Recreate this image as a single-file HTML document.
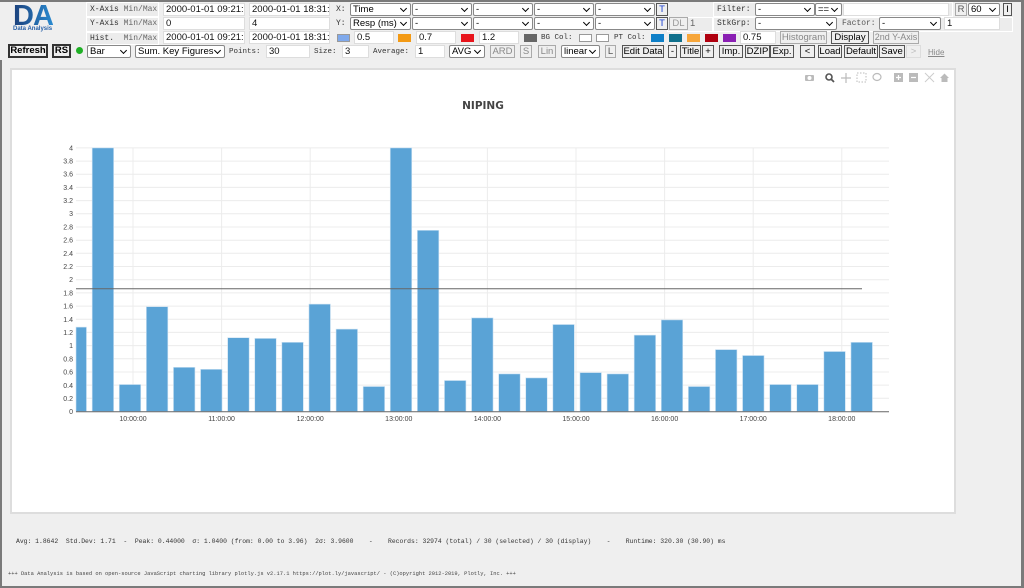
<!DOCTYPE html>
<html><head><meta charset="utf-8"><style>
*{box-sizing:border-box;margin:0;padding:0}
body{width:1024px;height:588px;background:#efefef;font-family:"Liberation Sans",sans-serif;font-size:9.5px;color:#000;position:relative;overflow:hidden}
.frame{position:absolute;left:0;top:0;width:1024px;height:588px;border-left:2px solid #7a7a7a;border-right:3px solid #7a7a7a;border-bottom:2px solid #7a7a7a;border-top:2px solid #7a7a7a;pointer-events:none}
.a{position:absolute;white-space:nowrap}
.cell{position:absolute;background:#ececec;border:1px solid #fff}
.lbl{position:absolute;font-family:"Liberation Mono",monospace;font-size:8px;color:#333;white-space:nowrap}
.lbl i{font-style:normal;color:#666}
.in,.sel,.btn{white-space:nowrap;overflow:hidden}
.in{position:absolute;height:13px;background:#fff;border:1px solid #ddd;font-size:9.5px;line-height:11px;padding-left:2px;color:#111}
.sel{position:absolute;height:13px;background:#fff;border:1px solid #888;font-size:9.5px;line-height:11px;padding-left:2px;border-radius:2px}
.sel:after{content:"";position:absolute;right:4px;top:2px;width:4px;height:4px;border-right:1.5px solid #000;border-bottom:1.5px solid #000;transform:rotate(45deg);background:#fff}
.btn{position:absolute;height:13px;background:#efefef;border:1px solid #555;font-size:9.5px;line-height:11px;text-align:center;color:#000}
.dis{color:#999;border-color:#aaa}
.sw{position:absolute;width:13px;height:8px}
</style></head><body>
<div class="frame"></div>
<div class="a" style="left:0;top:2px;width:1021px;height:58px;background:#efefef"></div>
<div class="cell" style="left:86px;top:2px;width:73px;height:15px"></div>
<div class="cell" style="left:86px;top:17px;width:73px;height:15px"></div>
<div class="cell" style="left:86px;top:32px;width:73px;height:13px"></div>
<div class="cell" style="left:713px;top:2px;width:240px;height:15px"></div>
<div class="cell" style="left:713px;top:17px;width:300px;height:15px"></div>
<div class="cell" style="left:667px;top:17px;width:46px;height:15px"></div>
<div class="a" style="left:13px;top:1px;font-size:29px;font-weight:bold;letter-spacing:-1px;background:linear-gradient(90deg,#1b3f7a,#2a8ad0);-webkit-background-clip:text;color:transparent;line-height:30px">DA</div>
<div class="a" style="left:13px;top:26px;font-size:6px;font-weight:bold;color:#2a62a8">Data Analysis</div>

<div class="lbl" style="left:90px;top:5px">X-Axis <i>Min/Max</i></div>
<div class="lbl" style="left:90px;top:19px">Y-Axis <i>Min/Max</i></div>
<div class="lbl" style="left:90px;top:34px">Hist.&nbsp; <i>Min/Max</i></div>
<div class="in" style="left:163px;top:3px;width:82px">2000-01-01 09:21:2</div>
<div class="in" style="left:249px;top:3px;width:81px">2000-01-01 18:31:4</div>
<div class="in" style="left:163px;top:17px;width:82px">0</div>
<div class="in" style="left:249px;top:17px;width:81px">4</div>
<div class="in" style="left:163px;top:31px;width:82px">2000-01-01 09:21:2</div>
<div class="in" style="left:249px;top:31px;width:81px">2000-01-01 18:31:4</div>

<div class="lbl" style="left:336px;top:5px">X:</div>
<div class="lbl" style="left:336px;top:19px">Y:</div>
<div class="sel" style="left:350px;top:3px;width:61px">Time</div>
<div class="sel" style="left:412px;top:3px;width:60px">-</div>
<div class="sel" style="left:473px;top:3px;width:60px">-</div>
<div class="sel" style="left:534px;top:3px;width:60px">-</div>
<div class="sel" style="left:595px;top:3px;width:60px">-</div>
<div class="btn" style="left:656px;top:3px;width:12px;color:#1a3fd0">T</div>
<div class="sel" style="left:350px;top:17px;width:61px">Resp (ms)</div>
<div class="sel" style="left:412px;top:17px;width:60px">-</div>
<div class="sel" style="left:473px;top:17px;width:60px">-</div>
<div class="sel" style="left:534px;top:17px;width:60px">-</div>
<div class="sel" style="left:595px;top:17px;width:60px">-</div>
<div class="btn" style="left:656px;top:17px;width:12px;color:#1a3fd0">T</div>
<div class="btn dis" style="left:669px;top:17px;width:19px">DL</div>
<div class="a" style="left:690px;top:18px;color:#666">1</div>

<div class="lbl" style="left:717px;top:5px">Filter:</div>
<div class="sel" style="left:755px;top:3px;width:60px">-</div>
<div class="sel" style="left:815px;top:3px;width:27px">==</div>
<div class="in" style="left:843px;top:3px;width:106px"></div>
<div class="btn dis" style="left:955px;top:3px;width:12px;color:#555">R</div>
<div class="sel" style="left:968px;top:3px;width:32px">60</div>
<div class="btn" style="left:1003px;top:3px;width:9px">I</div>
<div class="lbl" style="left:717px;top:19px">StkGrp:</div>
<div class="sel" style="left:755px;top:17px;width:82px">-</div>
<div class="lbl" style="left:842px;top:19px;color:#555">Factor:</div>
<div class="sel" style="left:879px;top:17px;width:62px">-</div>
<div class="in" style="left:944px;top:17px;width:56px">1</div>

<div class="sw" style="left:337px;top:34px;background:#7fa9ec;border:1px solid #999"></div>
<div class="in" style="left:354px;top:31px;width:40px">0.5</div>
<div class="sw" style="left:398px;top:34px;background:#f39a15"></div>
<div class="in" style="left:416px;top:31px;width:40px">0.7</div>
<div class="sw" style="left:461px;top:34px;background:#e8151c"></div>
<div class="in" style="left:479px;top:31px;width:40px">1.2</div>
<div class="sw" style="left:524px;top:34px;background:#666"></div>
<div class="lbl" style="left:541px;top:34px;font-size:7.5px">BG Col:</div>
<div class="sw" style="left:579px;top:34px;background:#fff;border:1px solid #999"></div>
<div class="sw" style="left:596px;top:34px;background:#fff;border:1px solid #999"></div>
<div class="lbl" style="left:614px;top:34px;font-size:7.5px">PT Col:</div>
<div class="sw" style="left:651px;top:34px;background:#0e7fc7"></div>
<div class="sw" style="left:669px;top:34px;background:#10708c"></div>
<div class="sw" style="left:687px;top:34px;background:#f7a63a"></div>
<div class="sw" style="left:705px;top:34px;background:#b0000f"></div>
<div class="sw" style="left:723px;top:34px;background:#8a1fb3"></div>
<div class="in" style="left:740px;top:31px;width:36px">0.75</div>
<div class="btn dis" style="left:780px;top:31px;width:47px;color:#888">Histogram</div>
<div class="btn" style="left:831px;top:31px;width:38px">Display</div>
<div class="btn dis" style="left:873px;top:31px;width:46px;color:#888;font-size:9px">2nd Y-Axis</div>

<div class="btn" style="left:8px;top:44px;width:40px;height:14px;border:2px solid #333;font-weight:bold;line-height:10px">Refresh</div>
<div class="btn" style="left:52px;top:44px;width:19px;height:14px;border:2px solid #333;font-weight:bold;line-height:10px">RS</div>
<div class="a" style="left:76px;top:47px;width:7px;height:7px;border-radius:50%;background:#1fb025"></div>
<div class="sel" style="left:87px;top:45px;width:44px">Bar</div>
<div class="sel" style="left:135px;top:45px;width:90px">Sum. Key Figures</div>
<div class="lbl" style="left:229px;top:48px;font-size:7.5px">Points:</div>
<div class="in" style="left:266px;top:45px;width:44px">30</div>
<div class="lbl" style="left:314px;top:48px;font-size:7.5px">Size:</div>
<div class="in" style="left:342px;top:45px;width:27px">3</div>
<div class="lbl" style="left:373px;top:48px;font-size:7.5px">Average:</div>
<div class="in" style="left:415px;top:45px;width:30px">1</div>
<div class="sel" style="left:449px;top:45px;width:36px">AVG</div>
<div class="btn dis" style="left:490px;top:45px;width:25px;color:#888">ARD</div>
<div class="btn dis" style="left:520px;top:45px;width:12px;color:#888">S</div>
<div class="btn dis" style="left:538px;top:45px;width:18px;color:#888">Lin</div>
<div class="sel" style="left:561px;top:45px;width:39px">linear</div>
<div class="btn dis" style="left:605px;top:45px;width:11px;color:#555">L</div>
<div class="btn" style="left:622px;top:45px;width:42px">Edit Data</div>
<div class="btn" style="left:668px;top:45px;width:9px">-</div>
<div class="btn" style="left:680px;top:45px;width:21px">Title</div>
<div class="btn" style="left:702px;top:45px;width:12px">+</div>
<div class="btn" style="left:719px;top:45px;width:24px">Imp.</div>
<div class="btn" style="left:745px;top:45px;width:25px">DZIP</div>
<div class="btn" style="left:770px;top:45px;width:24px">Exp.</div>
<div class="btn" style="left:800px;top:45px;width:15px">&lt;</div>
<div class="btn" style="left:818px;top:45px;width:24px">Load</div>
<div class="btn" style="left:844px;top:45px;width:34px">Default</div>
<div class="btn" style="left:879px;top:45px;width:26px">Save</div>
<div class="btn dis" style="left:906px;top:45px;width:15px;border-color:#ddd;color:#bbb">&gt;</div>
<div class="a" style="left:928px;top:48px;font-size:8px;color:#888;text-decoration:underline">Hide</div>

<div class="a" style="left:10px;top:68px;width:946px;height:446px;background:#fff;border:2px solid #ddd"></div>
<svg class="a" style="left:0;top:0" width="1024" height="588" xmlns="http://www.w3.org/2000/svg">
<g stroke="#ececec" stroke-width="1">
<line x1="76" x2="889" y1="398.3" y2="398.3"/><line x1="76" x2="889" y1="385.1" y2="385.1"/><line x1="76" x2="889" y1="372" y2="372"/><line x1="76" x2="889" y1="358.8" y2="358.8"/><line x1="76" x2="889" y1="345.6" y2="345.6"/><line x1="76" x2="889" y1="332.4" y2="332.4"/><line x1="76" x2="889" y1="319.2" y2="319.2"/><line x1="76" x2="889" y1="306.1" y2="306.1"/><line x1="76" x2="889" y1="292.9" y2="292.9"/><line x1="76" x2="889" y1="279.7" y2="279.7"/><line x1="76" x2="889" y1="266.5" y2="266.5"/><line x1="76" x2="889" y1="253.3" y2="253.3"/><line x1="76" x2="889" y1="240.2" y2="240.2"/><line x1="76" x2="889" y1="227" y2="227"/><line x1="76" x2="889" y1="213.8" y2="213.8"/><line x1="76" x2="889" y1="200.6" y2="200.6"/><line x1="76" x2="889" y1="187.4" y2="187.4"/><line x1="76" x2="889" y1="174.3" y2="174.3"/><line x1="76" x2="889" y1="161.1" y2="161.1"/><line x1="76" x2="889" y1="147.9" y2="147.9"/>
<line x1="133" x2="133" y1="148" y2="411"/><line x1="221.6" x2="221.6" y1="148" y2="411"/><line x1="310.2" x2="310.2" y1="148" y2="411"/><line x1="398.8" x2="398.8" y1="148" y2="411"/><line x1="487.4" x2="487.4" y1="148" y2="411"/><line x1="576" x2="576" y1="148" y2="411"/><line x1="664.6" x2="664.6" y1="148" y2="411"/><line x1="753.2" x2="753.2" y1="148" y2="411"/><line x1="841.8" x2="841.8" y1="148" y2="411"/>
</g>
<g fill="#5aa3d6" stroke="#cfe3f3" stroke-width="0.6" transform="translate(0,411.5) scale(1,-1)">
<rect x="76" width="10.5" y="0" height="84.4"/><rect x="92.15" width="21.5" y="0" height="263.6"/><rect x="119.25" width="21.5" y="0" height="27"/><rect x="146.35" width="21.5" y="0" height="104.8"/><rect x="173.45" width="21.5" y="0" height="44.2"/><rect x="200.55" width="21.5" y="0" height="42.2"/><rect x="227.65" width="21.5" y="0" height="73.8"/><rect x="254.75" width="21.5" y="0" height="73.1"/><rect x="281.85" width="21.5" y="0" height="69.2"/><rect x="308.95" width="21.5" y="0" height="107.4"/><rect x="336.05" width="21.5" y="0" height="82.4"/><rect x="363.15" width="21.5" y="0" height="25"/><rect x="390.25" width="21.5" y="0" height="263.6"/><rect x="417.35" width="21.5" y="0" height="181.2"/><rect x="444.45" width="21.5" y="0" height="31"/><rect x="471.55" width="21.5" y="0" height="93.6"/><rect x="498.65" width="21.5" y="0" height="37.6"/><rect x="525.75" width="21.5" y="0" height="33.6"/><rect x="552.85" width="21.5" y="0" height="87"/><rect x="579.95" width="21.5" y="0" height="38.9"/><rect x="607.05" width="21.5" y="0" height="37.6"/><rect x="634.15" width="21.5" y="0" height="76.4"/><rect x="661.25" width="21.5" y="0" height="91.6"/><rect x="688.35" width="21.5" y="0" height="25"/><rect x="715.45" width="21.5" y="0" height="61.9"/><rect x="742.55" width="21.5" y="0" height="56"/><rect x="769.65" width="21.5" y="0" height="27"/><rect x="796.75" width="21.5" y="0" height="27"/><rect x="823.85" width="21.5" y="0" height="60"/><rect x="850.95" width="21.5" y="0" height="69.2"/>
</g>
<line x1="76" x2="889" y1="411.8" y2="411.8" stroke="#666" stroke-width="1"/>
<line x1="76" x2="862" y1="288.8" y2="288.8" stroke="#666" stroke-width="1"/>
<g font-family="Liberation Sans,sans-serif" font-size="7" fill="#444" text-anchor="end">
<text x="73" y="414">0</text><text x="73" y="401">0.2</text><text x="73" y="388">0.4</text><text x="73" y="374.5">0.6</text><text x="73" y="361.5">0.8</text><text x="73" y="348">1</text><text x="73" y="335">1.2</text><text x="73" y="322">1.4</text><text x="73" y="308.5">1.6</text><text x="73" y="295.5">1.8</text><text x="73" y="282">2</text><text x="73" y="269">2.2</text><text x="73" y="256">2.4</text><text x="73" y="242.5">2.6</text><text x="73" y="229.5">2.8</text><text x="73" y="216">3</text><text x="73" y="203">3.2</text><text x="73" y="190">3.4</text><text x="73" y="176.5">3.6</text><text x="73" y="163.5">3.8</text><text x="73" y="150.5">4</text>
</g>
<g font-family="Liberation Sans,sans-serif" font-size="7" fill="#444" text-anchor="middle">
<text x="133" y="421">10:00:00</text><text x="221.6" y="421">11:00:00</text><text x="310.2" y="421">12:00:00</text><text x="398.8" y="421">13:00:00</text><text x="487.4" y="421">14:00:00</text><text x="576" y="421">15:00:00</text><text x="664.6" y="421">16:00:00</text><text x="753.2" y="421">17:00:00</text><text x="841.8" y="421">18:00:00</text>
</g>
<text x="483" y="109" font-family="DejaVu Sans,sans-serif" font-size="10.5" font-weight="bold" fill="#444" text-anchor="middle">NIPING</text>
<g fill="#bbb">
<rect x="805" y="75" width="9" height="6" rx="1"/><circle cx="809.5" cy="78" r="2" fill="#fff"/>
<circle cx="829" cy="77" r="3" fill="none" stroke="#555" stroke-width="1.6"/><line x1="831" y1="79" x2="834" y2="82" stroke="#555" stroke-width="1.8"/>
<path d="M846 73v10M841 78h10" stroke="#bbb" stroke-width="1.2"/>
<rect x="857" y="73" width="9" height="9" fill="none" stroke="#bbb" stroke-dasharray="1.5 1.5"/>
<ellipse cx="877" cy="77" rx="4" ry="3.5" fill="none" stroke="#bbb" stroke-width="1.2"/>
<rect x="894" y="73" width="9" height="9"/><path d="M896 77.5h5M898.5 75v5" stroke="#fff" stroke-width="1.2"/>
<rect x="909" y="73" width="9" height="9"/><path d="M911 77.5h5" stroke="#fff" stroke-width="1.2"/>
<path d="M925 73l9 9M934 73l-9 9" stroke="#ccc" stroke-width="1"/>
<path d="M940 78l4.5-4.5 4.5 4.5h-1.5v4h-6v-4z"/>
</g>
</svg>

<div class="a" style="left:16px;top:538px;font-family:'Liberation Mono',monospace;font-size:6.4px;color:#333">Avg: 1.8642&nbsp; Std.Dev: 1.71&nbsp; -&nbsp; Peak: 0.44000&nbsp; σ: 1.0400 (from: 0.00 to 3.96)&nbsp; 2σ: 3.9600&nbsp;&nbsp;&nbsp; -&nbsp;&nbsp;&nbsp; Records: 32974 (total) / 30 (selected) / 30 (display)&nbsp;&nbsp;&nbsp; -&nbsp;&nbsp;&nbsp; Runtime: 320.30 (30.90) ms</div>
<div class="a" style="left:8px;top:571px;font-family:'Liberation Mono',monospace;font-size:5.4px;color:#444">+++ Data Analysis is based on open-source JavaScript charting library plotly.js v2.17.1 https://plot.ly/javascript/ - (C)opyright 2012-2019, Plotly, Inc. +++</div>
</body></html>
